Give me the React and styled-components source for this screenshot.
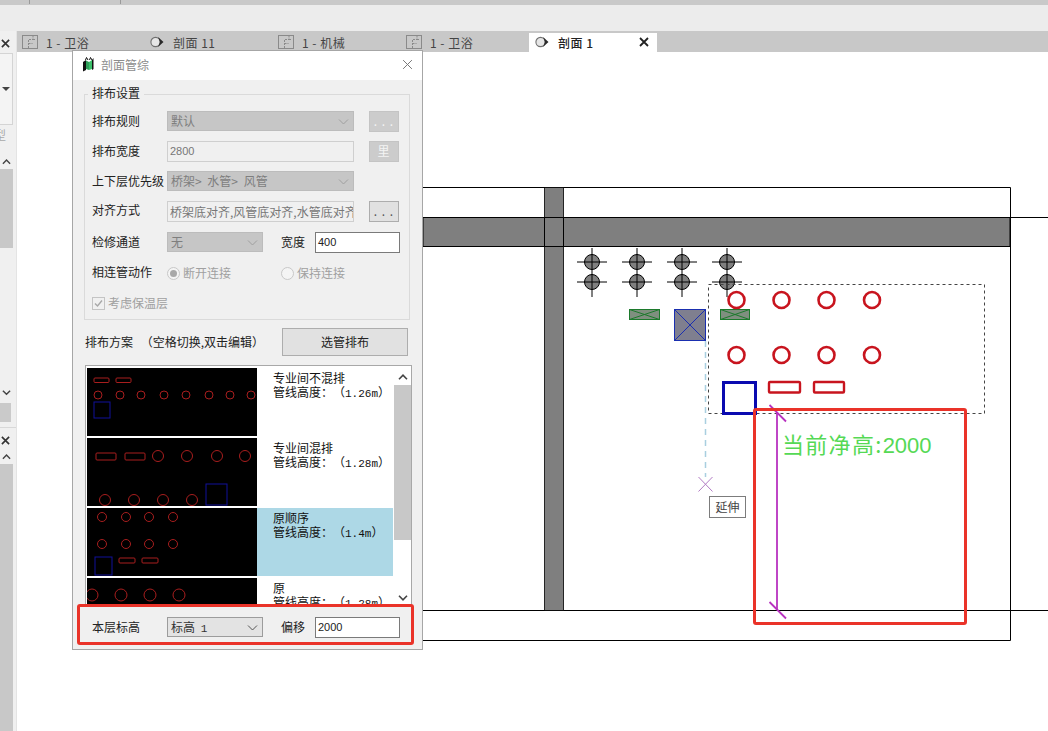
import React from 'react';
import styled, { createGlobalStyle } from 'styled-components';

const GlobalStyle = createGlobalStyle`
   html, body { margin: 0; padding: 0; background: #fff; }
   body { font-family: "Noto Sans CJK SC", "Liberation Sans", sans-serif; font-size: 12px; color: #222; }
   * { box-sizing: border-box; }
`;

const Page = styled.div`
   width: 1048px;
   height: 731px;
   overflow: hidden;
   display: flex;
   flex-direction: column;
`;

const TopStrip = styled.div`
   height: 5px;
   flex: none;
   background: #c9c9c9;
   display: flex;
   gap: 90px;
   padding-left: 29px;
`;
const StripMark = styled.span`
   width: 1px;
   height: 4px;
   background: #9a9a9a;
`;
const Ribbon = styled.div`
   height: 26px;
   flex: none;
   background: #ececec;
`;

const Main = styled.div`
   position: relative;
   flex: 1;
   min-height: 0;
   display: flex;
`;

/* left side panels, mostly cut off by the window edge */
const SidePanel = styled.div`
   width: 17px;
   flex: none;
   background: #f0f0f0;
   border-right: 1px solid #e4e4e4;
   display: flex;
   flex-direction: column;
   overflow: hidden;
`;
const SideHeader = styled.div`
   height: 22px;
   flex: none;
   padding: 3px 0 0 1px;
   display: flex;
   align-items: center;
   color: #333;
`;
const PropBox = styled.div`
   height: 72px;
   flex: none;
   width: 13px;
   background: #f4f4f4;
   border: 1px solid #d4d4d4;
   border-left: none;
   display: flex;
   align-items: center;
   justify-content: flex-end;
   padding-right: 2px;
`;
const TinyArrow = styled.span`
   width: 0;
   height: 0;
   border-left: 4px solid transparent;
   border-right: 4px solid transparent;
   border-top: 4px solid #444;
`;
const SideLabel = styled.div`
   height: 30px;
   margin-left: -6px;
   flex: none;
   line-height: 20px;
   color: #a8a8a8;
`;
const SideScroll = styled.div`
   flex: ${(p) => (p.$fill ? 1 : 'none')};
   height: ${(p) => (p.$fill ? 'auto' : '245px')};
   width: 13px;
   display: flex;
   flex-direction: column;
   min-height: 0;
`;
const SideArrow = styled.div`
   height: ${(p) => p.$size}px;
   flex: none;
   display: flex;
   align-items: center;
   justify-content: center;
   color: #444;
`;
const SideThumb = styled.div`
   height: ${(p) => (p.$fill ? 'auto' : '79px')};
   flex: ${(p) => (p.$fill ? 1 : 'none')};
   background: #c8c8c8;
`;
const SideSpacer = styled.div`
   flex: 1;
`;
const SideBlock = styled.div`
   width: 11px;
   height: 19px;
   flex: none;
   margin-top: 3px;
   background: #cacaca;
`;
const SideDivider = styled.div`
   height: 1px;
   flex: none;
   margin-top: 5px;
   background: #d8d8d8;
`;

const Workspace = styled.div`
   flex: 1;
   min-width: 0;
   display: flex;
   flex-direction: column;
`;
const TabBar = styled.div`
   height: 21px;
   flex: none;
   background: #c8c8c8;
   display: flex;
   align-items: flex-end;
`;
const Tab = styled.div`
   width: 128px;
   height: 19px;
   flex: none;
   display: flex;
   align-items: center;
   padding: 0 0 1px ${(p) => (p.$active ? '6px' : '5px')};
   gap: ${(p) => (p.$section ? '9px' : '8px')};
   background: ${(p) => (p.$active ? '#fff' : 'transparent')};
   color: ${(p) => (p.$active ? '#222' : '#444')};
   font-weight: ${(p) => (p.$active ? 500 : 400)};
   letter-spacing: 0.5px;
`;
const TabTitle = styled.span`
   flex: 1;
   white-space: nowrap;
`;
const TabClose = styled.span`
   width: 16px;
   margin-right: 2px;
   display: flex;
   color: #222;
`;

const Canvas = styled.div`
   position: relative;
   flex: 1;
   min-height: 0;
   background: #fff;
`;
const DrawingSvg = styled.svg`
   position: absolute;
   inset: 0;
   width: 100%;
   height: 100%;
`;
const ClearHeight = styled.div`
   position: absolute;
   left: 765px;
   top: 375px;
   color: #55d955;
   font-size: 22px;
   line-height: 32px;
   letter-spacing: 1.3px;
   white-space: nowrap;
   font-family: "Noto Sans CJK SC", sans-serif;
`;
const Digits = styled.span`
   font-family: "Liberation Sans", sans-serif;
   letter-spacing: 0;
`;
const ExtendTip = styled.div`
   position: absolute;
   left: 692px;
   top: 444px;
   width: 37px;
   height: 22px;
   padding-bottom: 2px;
   border: 1px solid #7c7c7c;
   background: #fff;
   color: #444;
   display: flex;
   align-items: center;
   justify-content: center;
`;
const RedFrame = styled.div`
   position: absolute;
   border: 3px solid #ea3329;
   border-radius: 3px;
   pointer-events: none;
`;
const CanvasFrame = styled(RedFrame)`
   left: 736px;
   top: 356px;
   width: 214px;
   height: 217px;
`;
const DialogFrame = styled(RedFrame)`
   left: 4px;
   top: 553px;
   width: 337px;
   height: 41px;
`;

/* dialog */
const Dialog = styled.div`
   position: absolute;
   left: 72px;
   top: 19px;
   width: 351px;
   height: 600px;
   background: #f0f0f0;
   border: 1px solid #a6a6a6;
   display: flex;
   flex-direction: column;
`;
const TitleBar = styled.div`
   height: 29px;
   flex: none;
   background: #fff;
   display: flex;
   align-items: center;
   padding: 0 9px 2px 9px;
   gap: 7px;
   color: #8c8c8c;
`;
const TitleText = styled.span`
   flex: 1;
`;
const DialogBody = styled.div`
   flex: 1;
   padding: 14px 0 0 11px;
   display: flex;
   flex-direction: column;
`;
const Group = styled.div`
   position: relative;
   width: 326px;
   height: 226px;
   flex: none;
   border: 1px solid #dadada;
   padding: 16px 0 0 7px;
   display: flex;
   flex-direction: column;
   gap: 10px;
`;
const GroupLegend = styled.span`
   position: absolute;
   left: 3px;
   top: -10px;
   padding: 0 4px;
   line-height: 16px;
   background: #f0f0f0;
   color: #222;
`;
const Row = styled.div`
   height: ${(p) => p.$height || 20}px;
   flex: none;
   display: flex;
   align-items: ${(p) => (p.$height ? 'flex-start' : 'center')};
`;
const Label = styled.span`
   width: ${(p) => p.$width || 75}px;
   margin-left: ${(p) => p.$offset || 0}px;
   padding-bottom: 2px;
   flex: none;
   white-space: nowrap;
   color: ${(p) => (p.$muted ? '#a0a0a0' : '#222')};
`;
const Combo = styled.div`
   width: ${(p) => p.$width}px;
   height: 20px;
   flex: none;
   display: flex;
   align-items: center;
   justify-content: space-between;
   padding: 0 4px 2px 3px;
   white-space: nowrap;
   word-spacing: 3px;
   background: ${(p) => (p.$enabled ? '#e3e3e3' : '#c6c6c6')};
   border: 1px solid ${(p) => (p.$enabled ? '#9c9c9c' : '#bcbcbc')};
   color: ${(p) => (p.$enabled ? '#333' : '#7e7e7e')};
`;
const Chevron = styled.svg`
   width: 11px;
   height: 6px;
   flex: none;
   margin-top: 3px;
   fill: none;
   stroke: ${(p) => (p.$enabled ? '#555' : '#9f9f9f')};
   stroke-width: 1;
`;
const Field = styled.div`
   width: ${(p) => p.$width}px;
   height: 21px;
   flex: none;
   padding: 0 2px 1px;
   display: flex;
   align-items: center;
   overflow: hidden;
   white-space: nowrap;
   font-family: "Liberation Sans", "Noto Sans CJK SC", sans-serif;
   font-size: 11px;
   background: ${(p) => (p.$enabled ? '#fff' : '#f0f0f0')};
   border: 1px solid ${(p) => (p.$enabled ? '#7a7a7a' : '#cfcfcf')};
   color: ${(p) => (p.$enabled ? '#222' : '#777')};
`;
const FieldCjk = styled.span`
   font-family: "Noto Sans CJK SC", sans-serif;
   font-size: 12px;
`;
const SmallButton = styled.div`
   width: 30px;
   height: 21px;
   flex: none;
   margin-left: 15px;
   padding-bottom: 2px;
   display: flex;
   align-items: center;
   justify-content: center;
   background: ${(p) => (p.$enabled ? '#e1e1e1' : '#cccccc')};
   border: 1px solid ${(p) => (p.$enabled ? '#adadad' : '#c4c4c4')};
   color: ${(p) => (p.$enabled ? '#555' : '#f4f4f4')};
   letter-spacing: 1px;
`;
const RadioOption = styled.div`
   width: ${(p) => p.$width}px;
   flex: none;
   display: flex;
   align-items: center;
   gap: 3px;
   color: #a0a0a0;
`;
const RadioDot = styled.span`
   width: 13px;
   height: 13px;
   margin-top: 2px;
   border-radius: 50%;
   border: 1px solid #c8c8c8;
   background: #f4f4f4;
   display: flex;
   align-items: center;
   justify-content: center;
   &::after {
      content: '';
      width: 7px;
      height: 7px;
      border-radius: 50%;
      background: ${(p) => (p.$on ? '#a8a8a8' : 'transparent')};
   }
`;
const CheckOption = styled.div`
   display: flex;
   align-items: center;
   gap: 3px;
   color: #a0a0a0;
`;
const CheckBox = styled.span`
   width: 13px;
   height: 13px;
   margin-top: 2px;
   border: 1px solid #c4c4c4;
   background: #f0f0f0;
   display: flex;
`;
const SchemeRow = styled.div`
   height: 28px;
   flex: none;
   margin-top: 8px;
   display: flex;
   align-items: center;
   justify-content: space-between;
   padding: 0 1px;
   width: 325px;
`;
const SchemeHint = styled.span`
   white-space: nowrap;
   word-spacing: 5px;
   padding-bottom: 2px;
`;
const SchemeButton = styled.div`
   width: 126px;
   height: 28px;
   padding-bottom: 2px;
   display: flex;
   align-items: center;
   justify-content: center;
   background: #e1e1e1;
   border: 1px solid #adadad;
   color: #222;
`;
const SchemeList = styled.div`
   width: 327px;
   height: 242px;
   flex: none;
   margin: 9px 0 0 1px;
   border: 1px solid #a8a8a8;
   background: #fff;
   padding: 2px 1px 0 1px;
   display: flex;
   overflow: hidden;
`;
const SchemeItems = styled.div`
   width: 306px;
   flex: none;
   display: flex;
   flex-direction: column;
   gap: 2px;
   overflow: hidden;
`;
const SchemeItem = styled.div`
   height: 68px;
   flex: none;
   display: flex;
   background: ${(p) => (p.$selected ? '#add8e6' : '#fff')};
`;
const Thumb = styled.svg`
   width: 170px;
   height: 68px;
   flex: none;
   background: #000;
   display: block;
`;
const SchemeText = styled.div`
   padding: 3px 0 0 16px;
   line-height: 14px;
   color: #111;
   white-space: nowrap;
   text-spacing-trim: space-all;
`;
const Mono = styled.span`
   font-family: "Liberation Mono", monospace;
   font-size: 11px;
`;
const ListScroll = styled.div`
   width: 17px;
   flex: none;
   display: flex;
   flex-direction: column;
   margin-left: 1px;
`;
const ListThumb = styled.div`
   height: 155px;
   flex: none;
   background: #c8c8c8;
`;
const DialogFooter = styled(Row)`
   margin-top: 10px;
   padding-left: 8px;
`;

/* drawing helpers */
const ChevronIcon = ({ up, size = 9 }) => (
   <svg width={size} height={size * 0.6} viewBox="0 0 10 6" fill="none" stroke="currentColor" strokeWidth="1.6">
      <polyline points={up ? '1,5.2 5,1.2 9,5.2' : '1,.8 5,4.8 9,.8'} />
   </svg>
);

const CloseIcon = ({ size = 10, width = 1.8, color = 'currentColor' }) => (
   <svg width={size} height={size} viewBox="0 0 10 10" stroke={color} strokeWidth={width}>
      <path d="M1 1 9 9M9 1 1 9" />
   </svg>
);

const PlanIcon = () => (
   <svg width="16" height="14" viewBox="0 0 16 14" fill="none" stroke="#8a8a8a">
      <rect x=".5" y=".5" width="15" height="13" />
      <path d="M6.5 13V4.5H11V.5M11 4.5h3M6.5 8.5h4" strokeDasharray="2 1" />
   </svg>
);

const SectionIcon = () => (
   <svg width="14" height="14" viewBox="0 0 14 14">
      <circle cx="5.5" cy="7" r="4.6" fill="#e6e6e6" stroke="#707070" strokeWidth="1.1" />
      <path d="M8 2 13.5 7 8 12 10 7z" fill="#2a2a2a" />
   </svg>
);

const AppIcon = () => (
   <svg width="12" height="15" viewBox="0 0 12 15">
      <path d="M1 5 4 3v10l-3 1.5z" fill="#111" />
      <path d="M4 3.5 7 5v8l-3-1z" fill="#2f9f5a" />
      <path d="M7 5l3-2v9l-3 1z" fill="#3bbf6a" />
      <path d="M10 3l1.5-2v11L10 13z" fill="#111" />
      <path d="M3.5 3 4.5.5 6 3M7.5 3 8.5.5 10 3" fill="none" stroke="#111" />
   </svg>
);

const ComboChevron = ({ enabled }) => (
   <Chevron viewBox="0 0 11 6" $enabled={enabled}>
      <polyline points="1,.5 5.5,5 10,.5" />
   </Chevron>
);

const Pipe = ({ x, y }) => (
   <g>
      <circle cx={x} cy={y} r="7.5" fill="#7f7f7f" stroke="#000" />
      <path d={`M${x - 15} ${y}H${x + 15}`} stroke="#000" />
   </g>
);

const Duct = ({ x, w }) => (
   <g stroke="#1c7a2c">
      <rect x={x} y="309.5" width={w} height="10" fill="#7f8f7f" />
      <path d={`M${x} 309.5 L${x + w} 319.5M${x + w} 309.5 L${x} 319.5`} fill="none" />
   </g>
);

const pipeColumns = [592, 637, 682, 727];
const redColumns = [736.5, 781.5, 826.5, 872];

const Drawing = () => (
   <DrawingSvg viewBox="17 52 1031 679">
      <g fill="none" stroke="#000" strokeWidth="1">
         <path d="M423 187.5H1010.5V640.5H423" />
         <path d="M423 610.5H1048M1010 217.5H1048" />
      </g>
      <rect x="423" y="217.5" width="587" height="29" fill="#7f7f7f" stroke="#000" />
      <rect x="544.5" y="187.5" width="19" height="423" fill="#7f7f7f" stroke="#000" strokeWidth=".8" />
      <path d="M544.5 217.5h19M544.5 246.5h19" stroke="#000" />
      <path d="M544.5 217.5v29M563.5 217.5v29" stroke="#000" />

      {pipeColumns.map((x) => (
         <g key={x}>
            <Pipe x={x} y={262} />
            <Pipe x={x} y={282} />
            <path d={`M${x} 248V297`} stroke="#000" />
         </g>
      ))}
      <Duct x={629.5} w={30} />
      <Duct x={720.5} w={29} />
      <rect x="674.5" y="309.5" width="31" height="31" fill="#7f7f8f" stroke="#1a2fb0" />
      <path d="M674.5 309.5 705.5 340.5M705.5 309.5 674.5 340.5" stroke="#1a2fb0" />

      <rect x="708.5" y="284.5" width="276" height="129" fill="none" stroke="#444" strokeDasharray="3 3" />
      {redColumns.map((x) => (
         <g key={x} fill="none" stroke="#c8141e" strokeWidth="2.6">
            <circle cx={x} cy="300" r="8" />
            <circle cx={x} cy="355" r="8" />
         </g>
      ))}
      <rect x="723.5" y="382.5" width="32" height="31" fill="none" stroke="#0a0ab0" strokeWidth="3" />
      <rect x="769" y="382" width="31" height="10.5" rx="1" fill="none" stroke="#c8141e" strokeWidth="2.4" />
      <rect x="814" y="382" width="30" height="10.5" rx="1" fill="none" stroke="#c8141e" strokeWidth="2.4" />

      <path d="M705.5 341V477" stroke="#a9cfe0" strokeWidth="1.5" strokeDasharray="6 5" />
      <path d="M698.5 477 712.5 491.5M712.5 477 698.5 491.5" stroke="#b27cc4" />

      <g stroke="#b832c0" strokeWidth="1.8">
         <path d="M777 412V609" />
         <path d="M769.5 405 786 421.5M769.5 602 786 618.5" />
      </g>
   </DrawingSvg>
);

const schemes = [
   {
      title: '专业间不混排',
      height: '1.26m',
      rects: [[7, 10, 15, 4.5], [29, 10, 15, 4.5]],
      circles: [[11, 27], [33, 27], [54, 27], [77, 27], [99, 27], [122, 27], [143, 27], [164, 27]],
      r: 4,
      square: [7, 34, 16, 16],
   },
   {
      title: '专业间混排',
      height: '1.28m',
      rects: [[9, 15, 20, 7], [38, 15, 20, 7]],
      circles: [[71, 18], [100, 18], [130, 18], [158, 18], [18, 62], [47, 62], [76, 62], [105, 62]],
      r: 5.5,
      square: [119, 46, 21, 21],
   },
   {
      title: '原顺序',
      height: '1.4m',
      selected: true,
      rects: [[32, 50, 16, 5], [55, 50, 16, 5]],
      circles: [[15, 9], [39, 9], [62, 9], [86, 9], [15, 36], [39, 36], [62, 36], [86, 36]],
      r: 4.5,
      square: [8, 49, 17, 18],
   },
   {
      title: '原',
      height: '1.28m',
      rects: [],
      circles: [[5, 17], [34, 17], [63, 17], [92, 17], [5, 34], [34, 34], [63, 34], [92, 34]],
      r: 6,
   },
];

const SchemeThumb = ({ rects, circles, r, square }) => (
   <Thumb viewBox="0 0 170 68">
      <g fill="none" stroke="#a81e1e">
         {rects.map(([x, y, w, h]) => (
            <rect key={x} x={x} y={y} width={w} height={h} rx="1" />
         ))}
         {circles.map(([x, y]) => (
            <circle key={`${x}-${y}`} cx={x} cy={y} r={r} />
         ))}
      </g>
      {square && <rect x={square[0]} y={square[1]} width={square[2]} height={square[3]} fill="none" stroke="#10109a" />}
   </Thumb>
);

const tabs = [
   { title: '1 - 卫浴', icon: 'plan' },
   { title: '剖面 11', icon: 'section' },
   { title: '1 - 机械', icon: 'plan' },
   { title: '1 - 卫浴', icon: 'plan' },
   { title: '剖面 1', icon: 'section', active: true },
];

export default function App() {
   return (
      <Page>
         <GlobalStyle />
         <TopStrip>
            <StripMark />
            <StripMark />
         </TopStrip>
         <Ribbon />
         <Main>
            <SidePanel>
               <SideHeader>
                  <CloseIcon size={9} />
               </SideHeader>
               <PropBox>
                  <TinyArrow />
               </PropBox>
               <SideLabel>型</SideLabel>
               <SideScroll>
                  <SideArrow $size={14}>
                     <ChevronIcon up />
                  </SideArrow>
                  <SideThumb />
                  <SideSpacer />
                  <SideArrow $size={14}>
                     <ChevronIcon />
                  </SideArrow>
               </SideScroll>
               <SideBlock />
               <SideDivider />
               <SideHeader>
                  <CloseIcon size={9} />
               </SideHeader>
               <SideScroll $fill>
                  <SideArrow $size={14}>
                     <ChevronIcon up />
                  </SideArrow>
                  <SideThumb $fill />
               </SideScroll>
            </SidePanel>

            <Workspace>
               <TabBar>
                  {tabs.map((tab, i) => (
                     <Tab key={i} $active={tab.active} $section={tab.icon === 'section'}>
                        {tab.icon === 'plan' ? <PlanIcon /> : <SectionIcon />}
                        <TabTitle>{tab.title}</TabTitle>
                        {tab.active && (
                           <TabClose>
                              <CloseIcon />
                           </TabClose>
                        )}
                     </Tab>
                  ))}
               </TabBar>
               <Canvas>
                  <Drawing />
                  <ClearHeight>
                     当前净高:<Digits>2000</Digits>
                  </ClearHeight>
                  <ExtendTip>延伸</ExtendTip>
                  <CanvasFrame />
               </Canvas>
            </Workspace>

            <Dialog>
               <TitleBar>
                  <AppIcon />
                  <TitleText>剖面管综</TitleText>
                  <CloseIcon size={11} width={0.9} color="#777" />
               </TitleBar>
               <DialogBody>
                  <Group>
                     <GroupLegend>排布设置</GroupLegend>
                     <Row>
                        <Label>排布规则</Label>
                        <Combo $width={187}>
                           默认
                           <ComboChevron />
                        </Combo>
                        <SmallButton>. . .</SmallButton>
                     </Row>
                     <Row>
                        <Label>排布宽度</Label>
                        <Field $width={187}>2800</Field>
                        <SmallButton>里</SmallButton>
                     </Row>
                     <Row>
                        <Label>上下层优先级</Label>
                        <Combo $width={187}>
                           桥架&gt; 水管&gt; 风管
                           <ComboChevron />
                        </Combo>
                     </Row>
                     <Row $height={21}>
                        <Label>对齐方式</Label>
                        <Field $width={187}>
                           <FieldCjk>桥架底对齐,风管底对齐,水管底对齐</FieldCjk>
                        </Field>
                        <SmallButton $enabled>. . .</SmallButton>
                     </Row>
                     <Row>
                        <Label>检修通道</Label>
                        <Combo $width={96}>
                           无
                           <ComboChevron />
                        </Combo>
                        <Label $width={34} $offset={18}>
                           宽度
                        </Label>
                        <Field $width={85} $enabled>
                           400
                        </Field>
                     </Row>
                     <Row>
                        <Label>相连管动作</Label>
                        <RadioOption $width={114}>
                           <RadioDot $on />
                           断开连接
                        </RadioOption>
                        <RadioOption $width={100}>
                           <RadioDot />
                           保持连接
                        </RadioOption>
                     </Row>
                     <Row>
                        <CheckOption>
                           <CheckBox>
                              <svg width="11" height="11" viewBox="0 0 11 11" fill="none" stroke="#a8a8a8" strokeWidth="1.4">
                                 <polyline points="2,5.5 4.5,8 9,2.5" />
                              </svg>
                           </CheckBox>
                           考虑保温层
                        </CheckOption>
                     </Row>
                  </Group>
                  <SchemeRow>
                     <SchemeHint>排布方案 （空格切换,双击编辑）</SchemeHint>
                     <SchemeButton>选管排布</SchemeButton>
                  </SchemeRow>
                  <SchemeList>
                     <SchemeItems>
                        {schemes.map((s) => (
                           <SchemeItem key={s.title} $selected={s.selected}>
                              <SchemeThumb {...s} />
                              <SchemeText>
                                 {s.title}
                                 <br />
                                 管线高度：（<Mono>{s.height}</Mono>）
                              </SchemeText>
                           </SchemeItem>
                        ))}
                     </SchemeItems>
                     <ListScroll>
                        <SideArrow $size={17}>
                           <ChevronIcon up size={10} />
                        </SideArrow>
                        <ListThumb />
                        <SideSpacer />
                        <SideArrow $size={17}>
                           <ChevronIcon size={10} />
                        </SideArrow>
                     </ListScroll>
                  </SchemeList>
                  <DialogFooter>
                     <Label>本层标高</Label>
                     <Combo $width={96} $enabled>
                        <span>
                           标高 <Mono>1</Mono>
                        </span>
                        <ComboChevron enabled />
                     </Combo>
                     <Label $width={34} $offset={18}>
                        偏移
                     </Label>
                     <Field $width={85} $enabled>
                        2000
                     </Field>
                  </DialogFooter>
               </DialogBody>
               <DialogFrame />
            </Dialog>
         </Main>
      </Page>
   );
}
